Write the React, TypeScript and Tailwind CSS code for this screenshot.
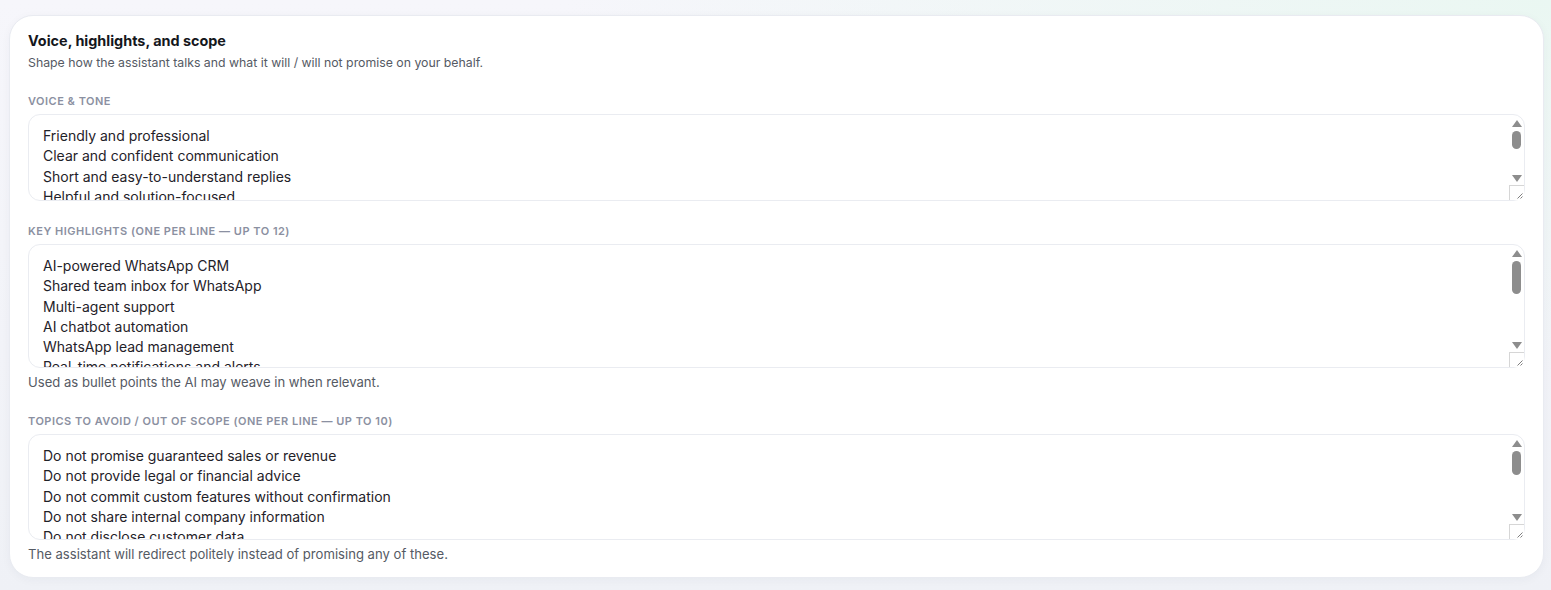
const voice = [
  "Friendly and professional",
  "Clear and confident communication",
  "Short and easy-to-understand replies",
  "Helpful and solution-focused",
  "Polite and respectful at all times",
  "Warm but never pushy",
  "Uses simple, jargon-free language",
  "Empathetic with frustrated customers",
  "Honest about what the product can do",
  "Consistent brand voice across chats",
].join("\n");

const highlights = [
  "AI-powered WhatsApp CRM",
  "Shared team inbox for WhatsApp",
  "Multi-agent support",
  "AI chatbot automation",
  "WhatsApp lead management",
  "Real-time notifications and alerts",
  "Broadcast campaigns",
  "Contact tagging and segmentation",
  "Analytics and reporting",
  "Integrations with popular tools",
  "Secure and reliable platform",
  "Quick setup and onboarding",
].join("\n");

const avoid = [
  "Do not promise guaranteed sales or revenue",
  "Do not provide legal or financial advice",
  "Do not commit custom features without confirmation",
  "Do not share internal company information",
  "Do not disclose customer data",
  "Do not discuss competitors negatively",
  "Do not quote unapproved pricing or discounts",
  "Do not promise delivery timelines",
  "Do not make medical or health claims",
  "Do not engage in political topics",
].join("\n");

// drawn scrollbar + resize grip, sits over the textarea's right edge
function FakeScrollbar({ thumbClass }: { thumbClass: string }) {
  return (
    <div className="pointer-events-none absolute top-px right-px bottom-px w-[15px] flex flex-col items-center">
      <svg width="10" height="7" viewBox="0 0 10 7" className="mt-[5px] shrink-0">
        <path d="M5 0L10 7H0Z" fill="#8d8d8d" />
      </svg>
      <div className={`mt-[4px] w-[9px] rounded-full bg-[#8d8d8d] shrink-0 ${thumbClass}`} />
      <div className="flex-1" />
      <svg width="10" height="7" viewBox="0 0 10 7" className="shrink-0">
        <path d="M0 0H10L5 7Z" fill="#8d8d8d" />
      </svg>
      <div className="mt-[3px] h-[15px] w-[15px] shrink-0 border-l border-t border-[#d6d6d6] bg-white">
        <svg width="14" height="14" viewBox="0 0 14 14">
          <path d="M12.5 7.5L7.5 12.5M12.5 10.5L10.5 12.5" stroke="#6f6f6f" strokeWidth="0.9" />
        </svg>
      </div>
    </div>
  );
}

function Field({
  label,
  value,
  heightClass,
  thumbClass,
  hint,
}: {
  label: string;
  value: string;
  heightClass: string;
  thumbClass: string;
  hint?: string;
}) {
  return (
    <div className="mt-[22px]">
      <label className="block text-[11px] leading-4 font-semibold uppercase tracking-[0.045em] text-[#8b90a1] mb-[5px]">
        {label}
      </label>
      <div className="relative">
        <textarea
          readOnly
          defaultValue={value}
          className={`block w-full ${heightClass} rounded-xl border border-[#eaecf1] bg-white pl-[14px] pr-[20px] pt-[11px] pb-[6px] text-sm leading-[1.45] text-[#1f2229] overflow-hidden resize-none outline-none`}
        />
        <FakeScrollbar thumbClass={thumbClass} />
      </div>
      {hint && <p className="mt-[5px] text-[13.1px] leading-[18px] text-[#555a64]">{hint}</p>}
    </div>
  );
}

export default function App() {
  return (
    <div
      className="min-h-[590px] bg-[radial-gradient(ellipse_at_top_right,#eaf7f2_0%,transparent_45%),linear-gradient(#f6f6fb,#eff1f6)] pt-[15px] pl-[9px] pr-[7px] pb-[14px]"
      style={{ fontFamily: "Inter, 'Noto Sans', sans-serif" }}
    >
      <div className="rounded-3xl border border-[#e9ebf1] bg-white px-[18px] pt-[15px] pb-[14px] shadow-[0_2px_10px_rgba(30,40,80,0.04)]">
        <h2 className="text-[14.4px] leading-5 font-bold text-[#15171c]">Voice, highlights, and scope</h2>
        <p className="mt-[4px] text-[12.3px] leading-4 text-[#555a64]">
          Shape how the assistant talks and what it will / will not promise on your behalf.
        </p>

        <Field label="Voice & tone" value={voice} heightClass="h-[87px]" thumbClass="h-[18px]" />
        <Field
          label="Key highlights (one per line — up to 12)"
          value={highlights}
          heightClass="h-[124px]"
          thumbClass="h-[33px]"
          hint="Used as bullet points the AI may weave in when relevant."
        />
        <Field
          label="Topics to avoid / out of scope (one per line — up to 10)"
          value={avoid}
          heightClass="h-[106px]"
          thumbClass="h-[24px]"
          hint="The assistant will redirect politely instead of promising any of these."
        />
      </div>
    </div>
  );
}
